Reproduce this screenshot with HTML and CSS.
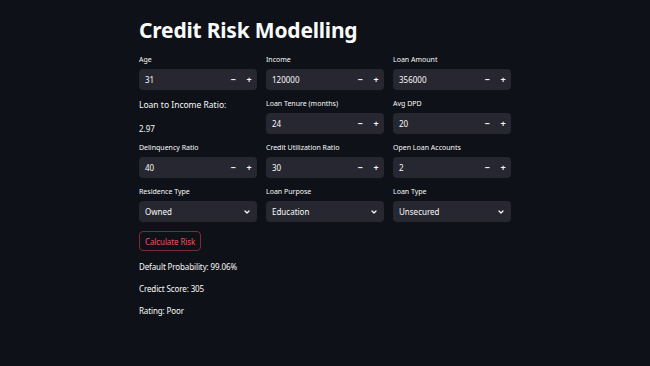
FILE: index.html
```html
<!DOCTYPE html>
<html>
<head>
<meta charset="utf-8">
<link rel="stylesheet" href="styles.css">
</head>
<body>
<main class="main">
  <h1 class="title">Credit Risk Modelling</h1>

  <div class="row">
    <div class="field">
      <div class="label">Age</div>
      <div class="num"><span class="val">31</span><span class="step">&minus;</span><span class="step">+</span></div>
    </div>
    <div class="field">
      <div class="label">Income</div>
      <div class="num"><span class="val">120000</span><span class="step">&minus;</span><span class="step">+</span></div>
    </div>
    <div class="field">
      <div class="label">Loan Amount</div>
      <div class="num"><span class="val">356000</span><span class="step">&minus;</span><span class="step">+</span></div>
    </div>
  </div>

  <div class="row">
    <div class="field textcol">
      <p class="md">Loan to Income Ratio:</p>
      <p class="md small">2.97</p>
    </div>
    <div class="field">
      <div class="label">Loan Tenure (months)</div>
      <div class="num"><span class="val">24</span><span class="step">&minus;</span><span class="step">+</span></div>
    </div>
    <div class="field">
      <div class="label">Avg DPD</div>
      <div class="num"><span class="val">20</span><span class="step">&minus;</span><span class="step">+</span></div>
    </div>
  </div>

  <div class="row">
    <div class="field">
      <div class="label">Delinquency Ratio</div>
      <div class="num"><span class="val">40</span><span class="step">&minus;</span><span class="step">+</span></div>
    </div>
    <div class="field">
      <div class="label">Credit Utilization Ratio</div>
      <div class="num"><span class="val">30</span><span class="step">&minus;</span><span class="step">+</span></div>
    </div>
    <div class="field">
      <div class="label">Open Loan Accounts</div>
      <div class="num"><span class="val">2</span><span class="step">&minus;</span><span class="step">+</span></div>
    </div>
  </div>

  <div class="row">
    <div class="field">
      <div class="label">Residence Type</div>
      <div class="sel"><span class="val">Owned</span><svg class="chev" viewBox="0 0 10 10" width="8" height="8"><path d="M2.5 3.8 L5 6.2 L7.5 3.8" fill="none" stroke="#fafafa" stroke-width="1.6" stroke-linecap="round" stroke-linejoin="round"/></svg></div>
    </div>
    <div class="field">
      <div class="label">Loan Purpose</div>
      <div class="sel"><span class="val">Education</span><svg class="chev" viewBox="0 0 10 10" width="8" height="8"><path d="M2.5 3.8 L5 6.2 L7.5 3.8" fill="none" stroke="#fafafa" stroke-width="1.6" stroke-linecap="round" stroke-linejoin="round"/></svg></div>
    </div>
    <div class="field">
      <div class="label">Loan Type</div>
      <div class="sel"><span class="val">Unsecured</span><svg class="chev" viewBox="0 0 10 10" width="8" height="8"><path d="M2.5 3.8 L5 6.2 L7.5 3.8" fill="none" stroke="#fafafa" stroke-width="1.6" stroke-linecap="round" stroke-linejoin="round"/></svg></div>
    </div>
  </div>

  <button class="btn">Calculate Risk</button>

  <p class="result">Default Probability: 99.06%</p>
  <p class="result">Credict Score: 305</p>
  <p class="result">Rating: Poor</p>
</main>
</body>
</html>
```

FILE: styles.css
```css
html, body {
  margin: 0;
  padding: 0;
  background: #0e1117;
  color: #fafafa;
  font-family: "Noto Sans", "Open Sans", sans-serif;
}

.main {
  width: 372px;
  margin: 0 auto;
  padding-top: 16px;
}

.title {
  margin: 0 0 11px 0;
  font-size: 21px;
  line-height: 28px;
  font-weight: 700;
  letter-spacing: -0.2px;
}

.row {
  display: grid;
  grid-template-columns: repeat(3, 1fr);
  column-gap: 9px;
  margin-bottom: 9px;
}

.field {
  height: 35px;
  display: flex;
  flex-direction: column;
}

.label {
  font-size: 7px;
  line-height: 10px;
  height: 10px;
  margin-bottom: 4px;
  white-space: nowrap;
}

.num, .sel {
  height: 21px;
  background: #262730;
  border-radius: 4px;
  display: flex;
  align-items: center;
  font-size: 8px;
}

.val {
  flex: 1;
  padding-left: 6px;
}

.step {
  width: 16px;
  text-align: center;
  font-size: 9px;
  font-weight: 700;
}

.chev {
  margin-right: 6px;
}

.textcol {
  justify-content: flex-start;
}

.md {
  margin: 0;
  font-size: 8.5px;
  line-height: 12px;
}

.md.small {
  font-size: 8px;
  margin-top: 12px;
}

.btn {
  display: block;
  height: 20px;
  padding: 0 5px;
  background: transparent;
  border: 1px solid #7d2a33;
  border-radius: 4px;
  color: #f0505a;
  font-family: inherit;
  font-size: 8px;
  letter-spacing: -0.1px;
  margin: 0 0 9px 0;
}

.result {
  margin: 0 0 9px 0;
  font-size: 8px;
  letter-spacing: -0.12px;
  line-height: 13px;
}
```
